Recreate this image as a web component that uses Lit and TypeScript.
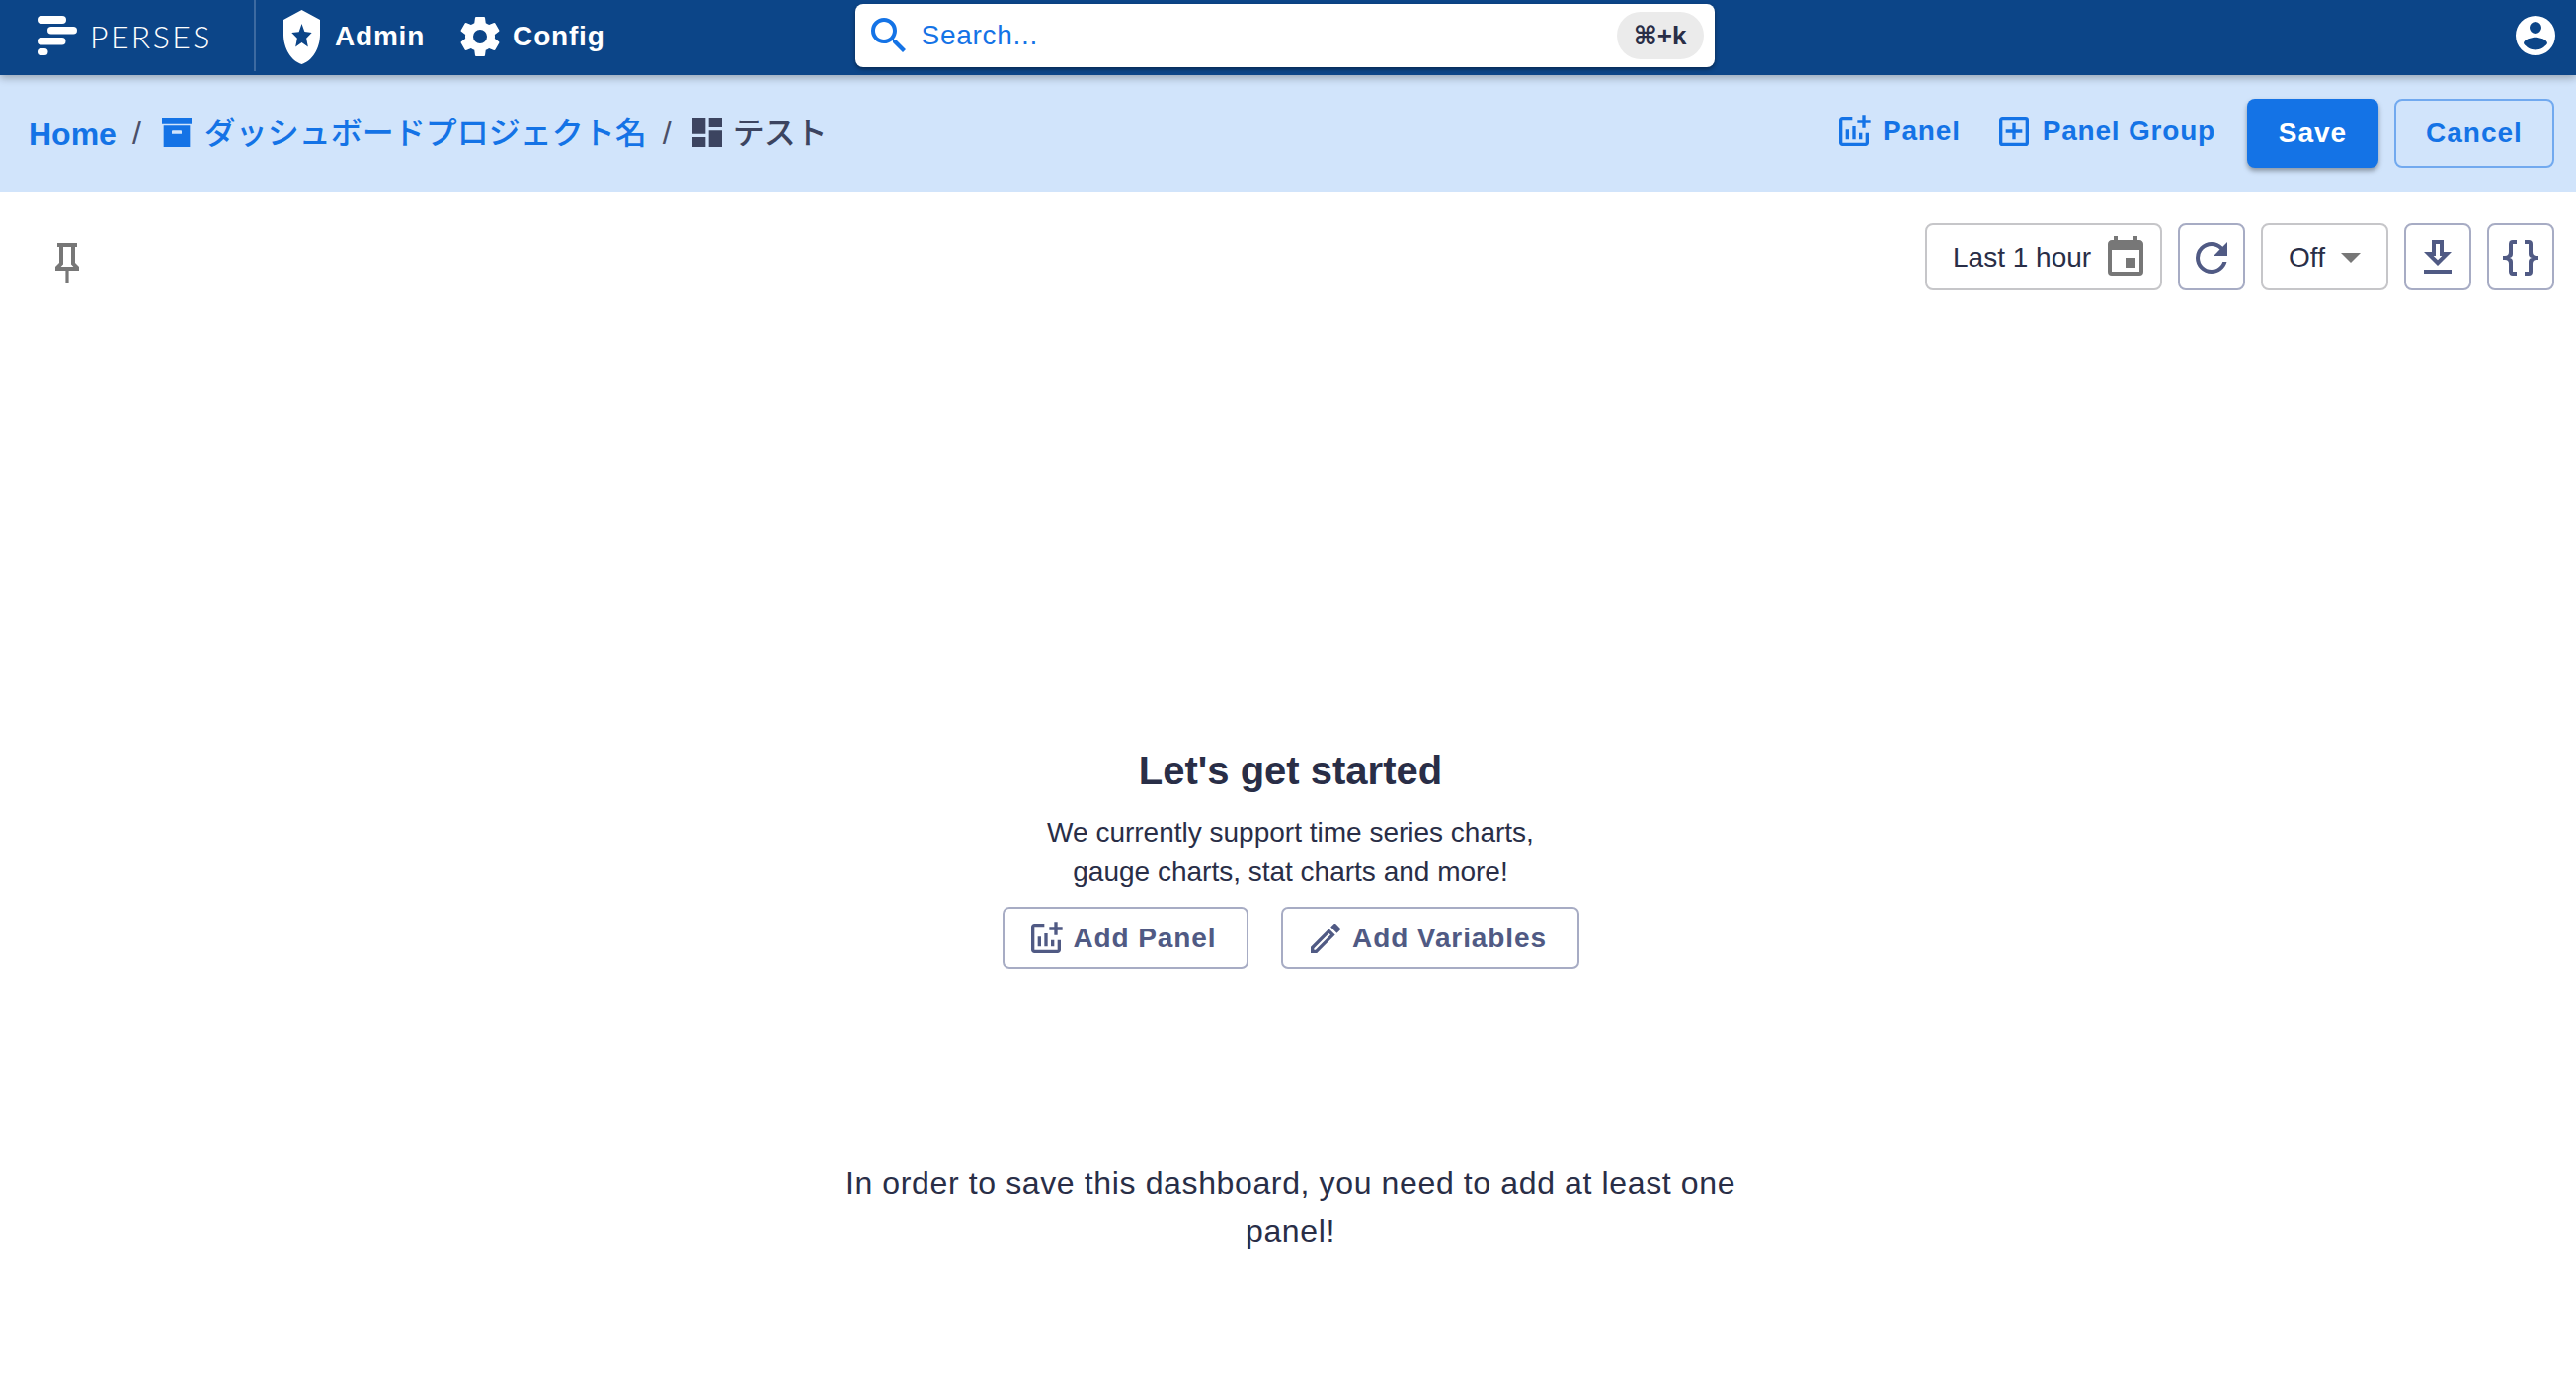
import { LitElement, html, css, svg } from "lit";
import { customElement } from "lit/decorators.js";

const P = {
  shield: "M12,1L3,5V11C3,16.55 6.84,21.74 12,23C17.16,21.74 21,16.55 21,11V5L12,1M15.08,16L12,14.15L8.93,16L9.74,12.5L7.03,10.16L10.61,9.85L12,6.56L13.39,9.84L16.97,10.15L14.26,12.5L15.08,16Z",
  cog: "M12,15.5A3.5,3.5 0 0,1 8.5,12A3.5,3.5 0 0,1 12,8.5A3.5,3.5 0 0,1 15.5,12A3.5,3.5 0 0,1 12,15.5M19.43,12.97C19.47,12.65 19.5,12.33 19.5,12C19.5,11.67 19.47,11.34 19.43,11L21.54,9.37C21.73,9.22 21.78,8.95 21.66,8.73L19.66,5.27C19.54,5.05 19.27,4.96 19.05,5.05L16.56,6.05C16.04,5.66 15.5,5.32 14.87,5.07L14.5,2.42C14.46,2.18 14.25,2 14,2H10C9.75,2 9.54,2.18 9.5,2.42L9.13,5.07C8.5,5.32 7.96,5.66 7.44,6.05L4.95,5.05C4.73,4.96 4.46,5.05 4.34,5.27L2.34,8.73C2.21,8.95 2.27,9.22 2.46,9.37L4.57,11C4.53,11.34 4.5,11.67 4.5,12C4.5,12.33 4.53,12.65 4.57,12.97L2.46,14.63C2.27,14.78 2.21,15.05 2.34,15.27L4.34,18.73C4.46,18.95 4.73,19.03 4.95,18.95L7.44,17.94C7.96,18.34 8.5,18.68 9.13,18.93L9.5,21.58C9.54,21.82 9.75,22 10,22H14C14.25,22 14.46,21.82 14.5,21.58L14.87,18.93C15.5,18.67 16.04,18.34 16.56,17.94L19.05,18.95C19.27,19.03 19.54,18.95 19.66,18.73L21.66,15.27C21.78,15.05 21.73,14.78 21.54,14.63L19.43,12.97Z",
  magnify: "M9.5,3A6.5,6.5 0 0,1 16,9.5C16,11.11 15.41,12.59 14.44,13.73L14.71,14H15.5L20.5,19L19,20.5L14,15.5V14.71L13.73,14.44C12.59,15.41 11.11,16 9.5,16A6.5,6.5 0 0,1 3,9.5A6.5,6.5 0 0,1 9.5,3M9.5,5C7,5 5,7 5,9.5C5,12 7,14 9.5,14C12,14 14,12 14,9.5C14,7 12,5 9.5,5Z",
  account: "M12,19.2C9.5,19.2 7.29,17.92 6,16C6.03,14 10,12.9 12,12.9C14,12.9 17.97,14 18,16C16.71,17.92 14.5,19.2 12,19.2M12,5A3,3 0 0,1 15,8A3,3 0 0,1 12,11A3,3 0 0,1 9,8A3,3 0 0,1 12,5M12,2A10,10 0 0,0 2,12A10,10 0 0,0 12,22A10,10 0 0,0 22,12A10,10 0 0,0 12,2Z",
  archive: "M3,3H21V7H3V3M4,8H20V21H4V8M9.5,11A0.5,0.5 0 0,0 9,11.5V13H15V11.5A0.5,0.5 0 0,0 14.5,11H9.5Z",
  dash: "M13,3V9H21V3M13,21H21V11H13M3,21H11V15H3M3,13H11V3H3V13Z",
  chartPlus: "M22 5V7H19V10H17V7H14V5H17V2H19V5H22M19 19H5V5H11V3H5C3.9 3 3 3.9 3 5V19C3 20.1 3.9 21 5 21H19C20.1 21 21 20.1 21 19V13H19V19M15 13V17H17V13H15M11 17H13V9H11V17M7 17H9V11H7V17Z",
  plusBox: "M19,19V5H5V19H19M19,3A2,2 0 0,1 21,5V19A2,2 0 0,1 19,21H5A2,2 0 0,1 3,19V5C3,3.89 3.9,3 5,3H19M11,7H13V11H17V13H13V17H11V13H7V11H11V7Z",
  pencil: "M14.06,9L15,9.94L5.92,19H5V18.08L14.06,9M17.66,3C17.41,3 17.15,3.1 16.96,3.29L15.13,5.12L18.88,8.87L20.71,7.04C21.1,6.65 21.1,6 20.71,5.63L18.37,3.29C18.17,3.09 17.92,3 17.66,3M14.06,6.19L3,17.25V21H6.75L17.81,9.94L14.06,6.19Z",
  calendar: "M19,19H5V8H19M16,1V3H8V1H6V3H5C3.89,3 3,3.89 3,5V19A2,2 0 0,0 5,21H19A2,2 0 0,0 21,19V5C21,3.89 20.1,3 19,3H18V1M17,12H12V17H17V12Z",
  refresh: "M17.65,6.35C16.2,4.9 14.21,4 12,4A8,8 0 0,0 4,12A8,8 0 0,0 12,20C15.73,20 18.84,17.45 19.73,14H17.65C16.83,16.33 14.61,18 12,18A6,6 0 0,1 6,12A6,6 0 0,1 12,6C13.66,6 15.14,6.69 16.22,7.78L13,11H20V4L17.65,6.35Z",
  download: "M13,5V11H14.17L12,13.17L9.83,11H11V5H13M15,3H9V9H5L12,16L19,9H15V3M19,18H5V20H19V18Z",
  braces: "M8,3A2,2 0 0,0 6,5V9A2,2 0 0,1 4,11H3V13H4A2,2 0 0,1 6,15V19A2,2 0 0,0 8,21H10V19H8V14A2,2 0 0,0 6,12A2,2 0 0,0 8,10V5H10V3M16,3A2,2 0 0,1 18,5V9A2,2 0 0,0 20,11H21V13H20A2,2 0 0,0 18,15V19A2,2 0 0,1 16,21H14V19H16V14A2,2 0 0,1 18,12A2,2 0 0,1 16,10V5H14V3H16Z",
  pin: "M16,12V4H17V2H7V4H8V12L6,14V16H11.2V22H12.8V16H18V14L16,12M8.8,14L10,12.8V4H14V12.8L15.2,14H8.8Z",
};

const icon = (d: string, cls = "") =>
  html`<svg class="icon ${cls}" viewBox="0 0 24 24" fill="currentColor"><path d=${d} fill-rule="evenodd"></path></svg>`;

const logo = svg`<rect x="0" y="0" width="29" height="8" rx="4"></rect><rect x="10" y="11" width="30" height="7.5" rx="3.75"></rect><rect x="0" y="22" width="28.5" height="7.5" rx="3.75"></rect><rect x="0" y="33" width="10.5" height="7" rx="3.5"></rect>`;

@customElement("app-root")
export class AppRoot extends LitElement {
  static styles = css`
    :host {
      display: flex;
      flex-direction: column;
      min-height: 1390px;
      background: #fff;
      color: #292e47;
      font-family: "Liberation Sans", Arial, sans-serif;
      font-size: 28px;
    }
    .icon { width: 40px; height: 40px; flex: none; display: block; }
    button { font: inherit; background: none; border: 0; padding: 0; color: inherit; display: flex; align-items: center; cursor: pointer; }

    .nav {
      height: 76px; flex: none; display: flex; align-items: center;
      background: #0c4588; color: #fff; position: relative; z-index: 1;
      box-shadow: 0 3px 8px rgba(0, 0, 0, 0.28);
      padding: 0 17px 0 38px;
    }
    .logo { display: flex; align-items: center; gap: 13px; width: 219px; height: 76px; box-sizing: border-box; padding-bottom: 4px; }
    .logo svg { width: 40px; height: 40px; fill: #fff; flex: none; }
    .logo span { font-family: Lato, sans-serif; font-weight: 300; font-size: 32px; letter-spacing: 2.4px; }
    .divider { width: 2px; height: 72px; background: #3d6aa1; align-self: flex-start; }
    .navbtn { font-weight: 700; letter-spacing: 0.8px; }
    .admin { margin-left: 28px; gap: 15px; padding-bottom: 2px; }
    .admin .icon { width: 37px; height: 55px; }
    .config { margin-left: 36px; gap: 9px; padding-bottom: 2px; }
    .config .icon { width: 48px; height: 48px; margin-left: -4px; }
    .search {
      margin-left: 253px; width: 870px; height: 64px; box-sizing: border-box; margin-top: -4px;
      background: #fff; border-radius: 8px; display: flex; align-items: center; padding: 0 11px 0 10px;
      box-shadow: 0 2px 4px rgba(0, 0, 0, 0.4); color: #1473e6;
      letter-spacing: 0.7px;
    }
    .search .icon { width: 48px; height: 48px; margin-right: 9px; }
    .kbd {
      margin-left: auto; width: 88px; height: 48px; border-radius: 24px; background: #ebebeb; color: #292e47;
      display: flex; align-items: center; justify-content: center; font-weight: 700; font-size: 26px; letter-spacing: 0;
      font-family: "Liberation Sans", "DejaVu Sans", sans-serif;
    }
    .avatar { margin-left: auto; width: 48px; height: 48px; margin-top: -4px; }

    .sub {
      height: 118px; flex: none; box-sizing: border-box; background: #d1e4fb;
      display: flex; align-items: center; padding: 0 22px 0 29px;
    }
    .crumbs { display: flex; align-items: center; font-size: 32px; font-family: "Liberation Sans", "Noto Sans CJK JP", sans-serif; }
    .crumb { display: flex; align-items: center; gap: 13px; }
    .crumb.dark { gap: 11px; }
    .link { color: #1473e6; }
    .home { font-weight: 700; font-size: 32px; padding-top: 2px; }
    .cjk { font-family: "Noto Sans CJK JP", sans-serif; font-weight: 500; padding-bottom: 6px; }
    .sep { margin: 0 21px 0 16px; color: #4a4f68; }
    .crumb .icon { margin: 0 -5px 0 -5px; padding-bottom: 2px; }
    .dark { color: #3c4460; }
    .actions { margin-left: auto; display: flex; align-items: center; }
    .txt { color: #1473e6; font-weight: 700; letter-spacing: 0.8px; gap: 9px; padding-bottom: 4px; }
    .txt .icon { width: 40px; height: 40px; margin-left: -5px; }
    .txt.group { margin-left: 39px; }
    .save, .cancel {
      height: 70px; box-sizing: border-box; border-radius: 8px; justify-content: center; font-weight: 700; letter-spacing: 1px;
    }
    .save { margin-left: 32px; width: 133px; background: #1473e6; color: #fff; box-shadow: 0 3px 5px rgba(0, 0, 0, 0.35); }
    .cancel { margin-left: 16px; width: 162px; border: 2px solid #71a9ef; color: #1473e6; }

    .main { flex: 1; display: flex; flex-direction: column; }
    .toolbar { display: flex; align-items: flex-start; padding: 32px 22px 0 44px; }
    .pin { width: 48px; height: 48px; margin-top: 16px; color: #777; }
    .tools { margin-left: auto; display: flex; gap: 16px; }
    .tool {
      height: 68px; box-sizing: border-box; border: 2px solid #a7acc4; border-radius: 8px; width: 68px; justify-content: center; color: #505a84; padding-top: 2px;
    }
    .tool .icon { width: 48px; height: 48px; }
    .plain { border-color: #c6c6c9; color: #292e47; }
    .time { width: 240px; padding: 2px 11px 0 26px; justify-content: space-between; }
    .time .icon { color: #777; }
    .off { width: 129px; gap: 12px; }
    .caret { width: 0; height: 0; border-left: 10px solid transparent; border-right: 10px solid transparent; border-top: 10px solid #777; margin-left: 4px; }

    .empty { display: flex; flex-direction: column; align-items: center; padding: 463px 0 0 5px; }
    h2 { margin: 0; font-size: 40px; line-height: 46px; font-weight: 700; }
    p { margin: 0; text-align: center; }
    .lead { margin-top: 20px; line-height: 40px; }
    .cta { display: flex; gap: 33px; margin-top: 15px; }
    .out {
      height: 63px; box-sizing: border-box; border: 2px solid #a7acc4; border-radius: 7px; color: #505a84; font-weight: 700; letter-spacing: 0.9px; gap: 7px; justify-content: center; padding-right: 8px;
    }
    .out .icon { width: 40px; height: 40px; }
    .w1 { width: 249px; margin-left: 1px; } .w2 { width: 302px; }
    .note { margin-top: 193px; width: 920px; font-size: 32px; line-height: 48px; letter-spacing: 0.63px; }
  `;

  render() {
    return html`
      <header class="nav">
        <div class="logo"><svg viewBox="0 0 40 40">${logo}</svg><span>PERSES</span></div>
        <div class="divider"></div>
        <button class="navbtn admin">
          <svg class="icon" viewBox="3 1 18 22" preserveAspectRatio="none" fill="currentColor"><path d=${P.shield} fill-rule="evenodd"></path></svg>
          Admin
        </button>
        <button class="navbtn config">${icon(P.cog)}Config</button>
        <div class="search">${icon(P.magnify)}<span>Search...</span><span class="kbd">⌘+k</span></div>
        ${icon(P.account, "avatar")}
      </header>
      <section class="sub">
        <nav class="crumbs">
          <span class="link home">Home</span>
          <span class="sep">/</span>
          <span class="crumb link">${icon(P.archive)}<span class="cjk">ダッシュボードプロジェクト名</span></span>
          <span class="sep">/</span>
          <span class="crumb dark">${icon(P.dash)}<span class="cjk">テスト</span></span>
        </nav>
        <div class="actions">
          <button class="txt">${icon(P.chartPlus)}Panel</button>
          <button class="txt group">${icon(P.plusBox)}Panel Group</button>
          <button class="save">Save</button>
          <button class="cancel">Cancel</button>
        </div>
      </section>
      <main class="main">
        <div class="toolbar">
          ${icon(P.pin, "pin")}
          <div class="tools">
            <button class="tool plain time">Last 1 hour${icon(P.calendar)}</button>
            <button class="tool">${icon(P.refresh)}</button>
            <button class="tool plain off">Off<span class="caret"></span></button>
            <button class="tool">${icon(P.download)}</button>
            <button class="tool">${icon(P.braces)}</button>
          </div>
        </div>
        <div class="empty">
          <h2>Let's get started</h2>
          <p class="lead">We currently support time series charts,<br />gauge charts, stat charts and more!</p>
          <div class="cta">
            <button class="out w1">${icon(P.chartPlus)}Add Panel</button>
            <button class="out w2">${icon(P.pencil)}Add Variables</button>
          </div>
          <p class="note">In order to save this dashboard, you need to add at least one panel!</p>
        </div>
      </main>
    `;
  }
}
